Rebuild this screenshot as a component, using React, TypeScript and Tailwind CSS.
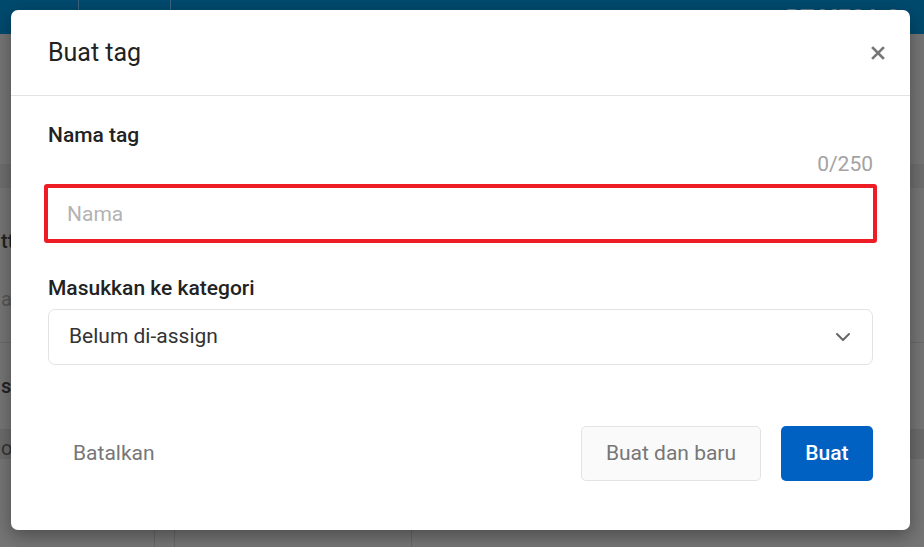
import { ChevronDown } from "lucide-react";

export default function App() {
  return (
    <div
      className="relative h-[547px] w-[924px] overflow-hidden bg-[#757575]"
      style={{ fontFamily: "Roboto, 'Noto Sans', sans-serif" }}
    >
      {/* background app, dimmed by overlay */}
      <div className="flex h-[34px] items-center gap-6 bg-[#004a6e] px-6 text-[18px] text-[#6a7f8c]">
        <span className="pt-1">Beli</span>
        <span className="h-full w-px bg-[#3c6580]" />
        <span className="pt-1">Biaya</span>
        <span className="h-full w-px bg-[#3c6580]" />
        <span className="ml-auto text-[22px] font-bold">PT MEGA C</span>
      </div>
      <div className="mt-[130px] h-[24px] bg-[#6e6e6e]" />
      <div className="mt-[38px] flex flex-col gap-[28px] text-[20px] text-[#222]">
        <span className="pl-[1px] font-medium">tt</span>
        <span className="pl-[1px] text-[#555]">ai</span>
        <div className="h-px bg-[#6a6a6a]" />
        <span className="pl-[1px] font-medium">sig</span>
        <div className="h-[30px] bg-[#6b6b6b] pl-[1px] pt-1 text-[#333]">or</div>
      </div>
      <div className="absolute bottom-0 left-[154px] h-[30px] w-px bg-[#666]" />
      <div className="absolute bottom-0 left-[174px] h-[30px] w-px bg-[#666]" />
      <div className="absolute bottom-0 left-[411px] h-[30px] w-px bg-[#666]" />

      {/* modal */}
      <div className="absolute left-[11px] top-[10px] flex h-[520px] w-[899px] flex-col rounded-[7px] bg-white shadow-[0_6px_18px_rgba(0,0,0,0.35)]">
        <div className="flex h-[86px] items-center justify-between border-b border-[#e3e3e3] pl-[37px] pr-[20px]">
          <h2 className="text-[25px] font-normal text-[#222]">Buat tag</h2>
          <button className="flex h-[24px] w-[24px] items-center justify-center text-[#777]">
            <svg width="14" height="14" viewBox="0 0 14 14">
              <path d="M2 2 L12 12 M12 2 L2 12" stroke="currentColor" strokeWidth="2.6" strokeLinecap="square" />
            </svg>
          </button>
        </div>

        <div className="flex flex-col px-[37px] pt-[25px]">
          <label className="text-[21px] font-medium leading-[28px] text-[#222]">Nama tag</label>
          <div className="mt-[2px] text-right text-[21px] leading-[26px] text-[#a3a3a3]">0/250</div>
          <div className="-mx-[4px] mt-[7px] rounded-[3px] border-[4px] border-[#ee1c25]">
            <input
              placeholder="Nama"
              className="h-[51px] w-full bg-white px-[19px] text-[21px] text-[#222] outline-none placeholder:text-[#b3b3b3]"
            />
          </div>

          <label className="mt-[31px] text-[21px] font-medium leading-[28px] text-[#222]">
            Masukkan ke kategori
          </label>
          <div className="mt-[7px] flex h-[56px] items-center justify-between rounded-[7px] border border-[#e3e3e3] pl-[20px] pr-[17px]">
            <span className="text-[21px] text-[#333]">Belum di-assign</span>
            <ChevronDown className="h-[24px] w-[24px] text-[#666]" strokeWidth={2} />
          </div>
        </div>

        <div className="mt-[61px] flex items-center px-[37px]">
          <button className="px-[25px] text-[21px] text-[#777]">Batalkan</button>
          <button className="ml-auto h-[55px] w-[180px] rounded-[5px] border border-[#e3e3e3] bg-[#fafafa] text-[21px] text-[#777]">
            Buat dan baru
          </button>
          <button className="ml-[20px] h-[55px] w-[92px] rounded-[5px] bg-[#0061c2] text-[21px] font-medium text-white">
            Buat
          </button>
        </div>
      </div>
    </div>
  );
}
